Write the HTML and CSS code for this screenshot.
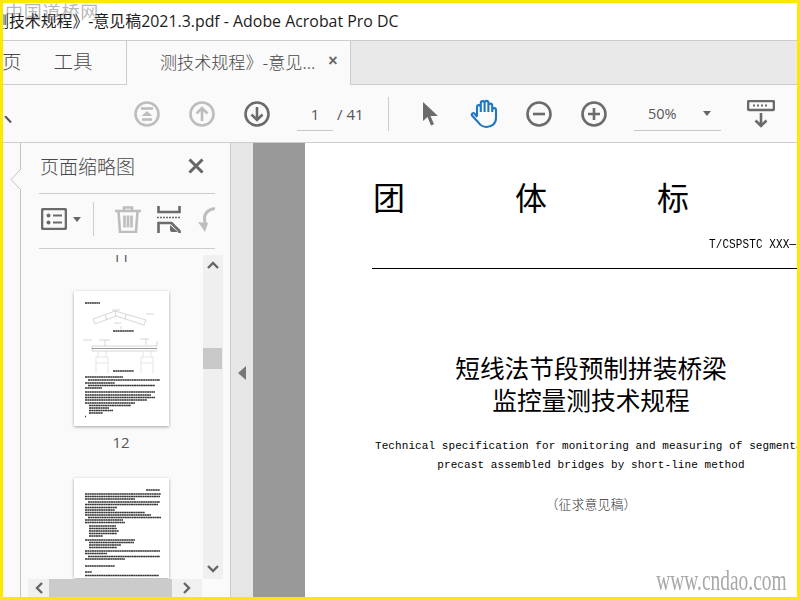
FILE: index.html
```html
<!DOCTYPE html>
<html lang="zh">
<head>
<meta charset="utf-8">
<title>Adobe Acrobat Pro DC</title>
<link rel="stylesheet" href="styles.css">
</head>
<body>
<div class="frame">
  <header class="titlebar"><span class="title">测技术规程》-意见稿2021.3.pdf - Adobe Acrobat Pro DC</span></header>

  <nav class="tabbar">
    <div class="navtabs"><span class="nav-home">页</span><span class="nav-tools">工具</span></div>
    <div class="doctab"><span class="doctab-name">测技术规程》-意见...</span><span class="doctab-close">×</span></div>
  </nav>

  <div class="toolbar">
    <svg class="tick" viewBox="0 0 8 8" width="8" height="8"><path d="M1 0 7 6.500" class="s-dark2"/></svg>
    <svg class="ic ic-first" viewBox="0 0 26 26" width="26" height="26"><circle cx="13" cy="13" r="11.500" class="s-off"/><path d="M7 7.500h12" class="s-off"/><path d="M13 10l-5.500 5h11z" class="f-off"/><path d="M8 18.500h10" class="s-off"/></svg>
    <svg class="ic ic-up" viewBox="0 0 26 26" width="26" height="26"><circle cx="13" cy="13" r="11.500" class="s-off"/><path d="M13 20V7M7.500 12.500 13 7l5.500 5.500" class="s-off"/></svg>
    <svg class="ic ic-down" viewBox="0 0 26 26" width="26" height="26"><circle cx="13" cy="13" r="11.500" class="s-on"/><path d="M13 6v13M7.500 13.500 13 19l5.500-5.500" class="s-on"/></svg>
    <div class="pagefield"><span class="pagenum">1</span></div>
    <span class="pagetotal">/ 41</span>
    <span class="tool-sep"></span>
    <svg class="ic ic-arrow" viewBox="0 0 18 26" width="18" height="26"><path d="M1 1v19l4.500-4 3.500 8.500 3-1.200-3.500-8.300H16z" class="f-on"/></svg>
    <svg class="ic ic-hand" viewBox="0 0 30 30" width="30" height="30"><path d="M8 17V8a1.900 1.900 0 0 1 3.800 0V13M11.800 13V4a1.900 1.900 0 0 1 3.800 0V13M15.600 13V3.800a1.900 1.900 0 0 1 3.800 0V13M19.400 13V6.500a1.900 1.900 0 0 1 3.800 0V13M23.200 13v-2a1.900 1.900 0 0 1 3.800 0V19c0 5.500-4 9-9.500 9-4 0-6.500-2-8.500-5l-6-6.500c-1-1.300 1-3 2.500-2L8 18" class="s-blue"/></svg>
    <svg class="ic ic-minus" viewBox="0 0 26 26" width="26" height="26"><circle cx="13" cy="13" r="11.500" class="s-on"/><path d="M7 13h12" class="s-on"/></svg>
    <svg class="ic ic-plus" viewBox="0 0 26 26" width="26" height="26"><circle cx="13" cy="13" r="11.500" class="s-on"/><path d="M7 13h12M13 7v12" class="s-on"/></svg>
    <div class="zoomfield"><span class="zoomval">50%</span><span class="caret caret-zoom"></span></div>
    <svg class="ic ic-read" viewBox="0 0 28 28" width="28" height="28"><rect x="1" y="1" width="26" height="9" rx="1.500" class="s-on"/><path d="M6 5.500h2M10 5.500h2M14 5.500h2M18 5.500h2" class="s-dots"/><path d="M14 13v13M8.500 20.500 14 26l5.500-5.500" class="s-on"/></svg>
  </div>

  <main class="workspace">
    <div class="rail"></div>
    <aside class="panel">
      <svg class="notch" viewBox="0 0 11 20" width="11" height="20"><path d="M11 0H10L1 9.500 10 19h1z" class="f-panel"/><path d="M10 0 1 9.500 10 19" class="s-notch"/></svg>
      <div class="panel-head"><span class="panel-title">页面缩略图</span>
        <svg class="panel-close" viewBox="0 0 16 16" width="16" height="16"><path d="M1.500 1.500l13 13M14.500 1.500l-13 13" class="s-close"/></svg>
      </div>
      <div class="panel-tools">
        <svg class="pt-list" viewBox="0 0 26 22" width="26" height="22"><rect x="1" y="1" width="24" height="20" rx="2" class="s-on"/><circle cx="7.500" cy="7.500" r="2" class="f-on"/><circle cx="7.500" cy="14.500" r="2" class="f-on"/><path d="M12 7.500h9M12 14.500h9" class="s-thin"/></svg>
        <span class="caret caret-list"></span>
        <span class="pt-sep"></span>
        <svg class="pt-trash" viewBox="0 0 26 28" width="26" height="28"><path d="M0 6h26M9 6V2.500h8V6M3.500 6l1.500 21h16l1.500-21M9.500 10.500v12M13 10.500v12M16.500 10.500v12" class="s-off"/></svg>
        <svg class="pt-extract" viewBox="0 0 24 27" width="24" height="27"><path d="M1.500 0v6h21V0" class="s-on"/><path d="M0 11.500h24" class="s-dash"/><path d="M1.500 27V17H14.500l8 8v2" class="s-on"/><path d="M13 19v5a2 2 0 0 0 2 2h6z" class="f-on"/></svg>
        <svg class="pt-rotate" viewBox="0 0 17 25" width="17" height="25"><path d="M17 1.500C10 2.500 6.500 6.500 6.500 12c0 2 .5 4 1.500 6" class="s-off-w"/><path d="M0 15l10 1-3 9z" class="f-off"/></svg>
      </div>
      <div class="thumb-area">
        <div class="thumb-view">
          <div class="thumb-label thumb-label-cut">11</div>
          <svg class="thumb" viewBox="0 0 95 135" width="95" height="135"><g class="t-blur">
            <path d="M11 12h15" class="t-text"/>
            <path d="M19 28 41 20 72 29M21 33 42 25 70 34M19 28l2 5M72 29l-2 5M31 24l2 5M41 20l1 5M52 23l-1 5M38 19h8M72 23h8M40 32h7M47 35v3" class="t-line"/>
            <path d="M39 40h21M39 80h21" class="t-text"/>
            <path d="M18 55h65M18 60h65M18 55v5M83 55v-5M25 49h11M66 48h9M9 49h9M31 49v6M72 48v6" class="t-line"/>
            <path d="M18 57.500h65" class="t-mid"/>
            <path d="M22 66v16M34 66v16M22 66h12M24 60v6M32 60v6M22 72h12M67 66v16M79 66v16M67 66h12M69 60v6M77 60v6M67 72h12" class="t-faint"/>
            <path d="M11 86h38M14 89h72M11 92h30M14 94.500h67M11 97h17M11 101h70M11 104h66M11 106.500h70M11 109h62M11 112h50M15 114.500h42M15 117h20M15 119.500h24M15 122h14" class="t-text"/>
            <path d="M11 125.500h1" class="t-text"/>
          </g></svg>
          <div class="thumb-label">12</div>
          <svg class="thumb thumb-next" viewBox="0 0 95 100" width="95" height="100"><g class="t-blur">
            <path d="M72 12h14M11 16h76M11 18.500h75M11 21h50M14 24h72M11 26.500h73M11 29.500h32M11 32h30M11 34.500h60M11 37h66M14 39.500h73M11 42h38M11 44.500h40M15 48h27M15 50.500h28M15 53h30M15 55.500h28M15 58h14M11 62h50M15 64.500h45M15 67h32M15 69.500h28M11 73h75M11 75.500h22M14 78.500h72M11 81h40M11 88h30M11 94h7M11 97.500h74" class="t-text"/>
          </g></svg>
        </div>
        <div class="vscroll">
          <button class="sb-btn sb-up"><svg viewBox="0 0 12 8" width="12" height="8"><path d="M1 7l5-5 5 5" class="s-sb"/></svg></button>
          <div class="vtrack"><div class="vthumb"></div></div>
          <button class="sb-btn sb-down"><svg viewBox="0 0 12 8" width="12" height="8"><path d="M1 1l5 5 5-5" class="s-sb"/></svg></button>
        </div>
      </div>
      <div class="hscroll">
        <button class="hs-btn hs-left"><svg viewBox="0 0 8 12" width="8" height="12"><path d="M7 1 2 6l5 5" class="s-sb"/></svg></button>
        <div class="hthumb"></div>
        <button class="hs-btn hs-right"><svg viewBox="0 0 8 12" width="8" height="12"><path d="M1 1l5 5-5 5" class="s-sb"/></svg></button>
        <div class="hcorner"></div>
      </div>
    </aside>
    <div class="handle"><span class="handle-arrow"></span></div>
    <div class="gutter"></div>
    <article class="page">
      <div class="doc-std"><span>团</span><span>体</span><span>标</span></div>
      <div class="doc-code">T/CSPSTC XXX—2021</div>
      <div class="doc-rule"></div>
      <h1 class="doc-title">短线法节段预制拼装桥梁<br>监控量测技术规程</h1>
      <p class="doc-en doc-en-1">Technical specification for monitoring and measuring of segmental</p>
      <p class="doc-en doc-en-2">precast assembled bridges by short-line method</p>
      <p class="doc-note">（征求意见稿）</p>
    </article>
  </main>

  <div class="wm wm-cn">中国道桥网</div>
  <div class="wm wm-url">www.cndao.com</div>
</div>
</body>
</html>
```
FILE: styles.css
```css
* { box-sizing: border-box; }
html, body { margin: 0; padding: 0; }
body { width: 800px; height: 600px; overflow: hidden; background: #fff; font-family: "Open Sans", "Noto Sans CJK SC", sans-serif; color: #4b4b4b; }
.frame { position: relative; width: 800px; height: 600px; border: solid #ffe800; border-width: 3px 3px 3px 3px; display: flex; flex-direction: column; overflow: hidden; background: #fff; }

.titlebar { height: 37px; flex: none; background: #fff; overflow: hidden; display: flex; align-items: center; padding-bottom: 3px; }
.title { margin-left: -10px; font-size: 15.900px; color: #1c1c1c; white-space: nowrap; font-family: "Open Sans", "Noto Sans CJK SC", sans-serif; }

.tabbar { height: 45px; flex: none; display: flex; background: #e9e9e9; border-top: 1px solid #cdcdcd; border-bottom: 1px solid #cdcdcd; }
.navtabs { width: 123px; background: #fafafa; font-size: 19.500px; color: #484848; display: flex; align-items: center; overflow: hidden; padding-bottom: 4px; font-family: "Noto Sans CJK SC", sans-serif; font-weight: 300; }
.nav-home { margin-left: -1px; }
.nav-tools { margin-left: 32px; }
.doctab { width: 225px; background: #fafafa; margin-bottom: -1px; border-left: 1px solid #cdcdcd; border-right: 1px solid #cdcdcd; display: flex; align-items: center; padding-bottom: 4px; }
.doctab-name { margin-left: 33px; font-size: 17.100px; color: #484848; white-space: nowrap; font-family: "Noto Sans CJK SC", sans-serif; font-weight: 300; }
.doctab-close { margin-left: 13px; font-size: 16px; font-weight: 700; color: #666; font-family: "Liberation Sans", sans-serif; }

.toolbar { height: 58px; flex: none; background: #fafafa; border-bottom: 1px solid #cdcdcd; display: flex; align-items: center; position: relative; }
.tick { margin: 13px 0 0 1px; flex: none; }
.ic { flex: none; display: block; }
.ic-first { margin-left: 122px; }
.ic-up { margin-left: 29px; }
.ic-down { margin-left: 29px; }
.pagefield { width: 36px; height: 34px; margin: 1px 0 0 27px; border-bottom: 1px solid #c8c8c8; display: flex; align-items: center; justify-content: center; }
.pagenum { font-size: 15px; color: #555; }
.pagetotal { margin-left: 4px; width: 27px; font-size: 15px; color: #555; white-space: nowrap; }
.tool-sep { width: 1px; height: 34px; background: #cdcdcd; margin-left: 24px; }
.ic-arrow { margin-left: 33px; }
.ic-hand { margin-left: 29px; }
.ic-minus { margin-left: 27px; }
.ic-plus { margin-left: 29px; }
.zoomfield { width: 87px; height: 34px; margin: 1px 0 0 27px; border-bottom: 1px solid #c8c8c8; display: flex; align-items: center; }
.zoomval { margin-left: 14px; font-size: 14.500px; color: #555; }
.caret { display: block; width: 0; height: 0; border-style: solid; border-color: #666 transparent transparent; }
.caret-zoom { border-width: 5px 4px 0; margin-left: 26px; }
.ic-read { margin-left: 26px; }

.s-on, .s-off, .s-blue, .s-close, .s-thin, .s-off-w, .s-sb, .s-notch, .s-dark2, .s-dots, .s-dash { fill: none; }
.s-on { stroke: #6b6b6b; stroke-width: 2.600; }
.s-off { stroke: #bdbdbd; stroke-width: 2.600; }
.s-off-w { stroke: #bdbdbd; stroke-width: 3; }
.f-on { fill: #6b6b6b; }
.f-off { fill: #bdbdbd; }
.f-panel { fill: #fafafa; }
.s-blue { stroke: #1f77c4; stroke-width: 2.100; stroke-linejoin: round; }
.s-close { stroke: #666; stroke-width: 3; }
.s-thin { stroke: #6b6b6b; stroke-width: 2; }
.s-dots { stroke: #6b6b6b; stroke-width: 2; }
.s-dash { stroke: #6b6b6b; stroke-width: 1.500; stroke-dasharray: 2 1; }
.s-sb { stroke: #666; stroke-width: 2.400; }
.s-notch { stroke: #c4c4c4; stroke-width: 1; }
.s-dark2 { stroke: #555; stroke-width: 2; }

.workspace { flex: 1; min-height: 0; display: flex; }
.rail { width: 18px; flex: none; background: #fafafa; border-right: 1px solid #c4c4c4; }
.panel { position: relative; width: 210px; flex: none; background: #fafafa; border-right: 1px solid #cdcdcd; display: flex; flex-direction: column; }
.notch { position: absolute; left: -11px; top: 27px; }
.panel-head { height: 51px; margin: 0 15px 0 18px; flex: none; border-bottom: 1px solid #cdcdcd; display: flex; align-items: center; justify-content: space-between; padding: 0 11px 6px 1px; }
.panel-title { font-size: 19px; color: #484848; font-family: "Noto Sans CJK SC", sans-serif; font-weight: 300; }
.panel-close { margin-top: 1px; }
.panel-tools { height: 55px; margin: 0 15px 0 18px; flex: none; border-bottom: 1px solid #cdcdcd; display: flex; align-items: center; overflow: hidden; padding-bottom: 4px; }
.panel-tools svg { flex: none; }
.pt-list { margin-left: 2px; }
.caret-list { border-width: 5px 4px 0; margin-left: 6px; }
.pt-sep { width: 1px; height: 34px; background: #cdcdcd; margin-left: 12px; }
.pt-trash { margin-left: 21px; }
.pt-extract { margin-left: 16px; }
.pt-rotate { margin-left: 17px; }

.thumb-area { flex: 1; min-height: 0; display: flex; padding-top: 6px; }
.thumb-view { width: 182px; flex: none; overflow: hidden; padding-left: 18px; display: flex; flex-direction: column; align-items: center; }
.thumb-label { font-size: 15px; line-height: 20px; color: #555; font-family: "Open Sans", sans-serif; flex: none; }
.thumb-label-cut { margin-top: -9px; }
.thumb { flex: none; display: block; background: #fff; box-shadow: 0 1px 3px rgba(0,0,0,.35); margin-top: 25px; }
.thumb + .thumb-label { margin-top: 6px; }
.thumb-next { margin-top: 26px; }
.t-blur { filter: blur(.3px); }
.t-text { fill: none; stroke: #111; stroke-width: 1.400; stroke-dasharray: 2 .3; opacity: .85; }
.t-line { fill: none; stroke: #bbb; stroke-width: .6; }
.t-mid { fill: none; stroke: #999; stroke-width: 1; }
.t-faint { fill: none; stroke: #d4d4d4; stroke-width: .6; }
.vscroll { width: 20px; flex: none; background: #efefef; display: flex; flex-direction: column; }
.sb-btn, .hs-btn { border: 0; padding: 0; margin: 0; background: #f0f0f0; display: flex; align-items: center; justify-content: center; flex: none; }
.sb-btn { height: 20px; }
.vtrack { flex: 1; padding-top: 73px; }
.vthumb { width: 19px; height: 21px; background: #c8c8c8; }
.hscroll { height: 18px; flex: none; margin-left: 7px; width: 195px; display: flex; }
.hs-btn { width: 21px; }
.hs-right { width: 30px; }
.hthumb { width: 123px; background: #cbcbcb; flex: none; }
.hcorner { flex: 1; background: #fafafa; }

.handle { width: 22px; flex: none; background: #e6e6e6; display: flex; align-items: center; justify-content: center; }
.handle-arrow { display: block; width: 0; height: 0; border-style: solid; border-width: 7px 8px 7px 0; border-color: transparent #777 transparent transparent; margin-top: 6px; }
.gutter { width: 52px; flex: none; background: #999; }

.page { flex: 1; min-width: 0; background: #fff; overflow: hidden; color: #000; padding-left: 67px; font-family: "Noto Sans CJK SC", sans-serif; }
.doc-std { height: 37px; margin: 33px 0 0 1px; overflow: hidden; width: 500px; display: flex; gap: 110px; font-size: 32px; line-height: 40px; }
.doc-code { margin: 24px 0 0 337px; width: 200px; height: 16px; font: 11px/16px "Liberation Mono", monospace; letter-spacing: .1px; white-space: nowrap; transform: scaleY(1.15); }
.doc-rule { width: 440px; height: 1px; background: #000; margin-top: 15px; }
.doc-title { width: 438px; margin: 82px 0 0; font-size: 24.700px; line-height: 32px; font-weight: 400; text-align: center; }
.doc-en { margin: 0; font: 11px/19px "Liberation Mono", monospace; letter-spacing: .08px; white-space: nowrap; }
.doc-en-1 { margin: 22px 0 0 3px; }
.doc-en-2 { width: 438px; text-align: center; }
.doc-note { margin: 20px 0 0; width: 438px; text-align: center; font-size: 13px; line-height: 18px; color: #333; font-weight: 300; }

.wm { position: absolute; white-space: nowrap; pointer-events: none; }
.wm-cn { left: 2px; top: -5px; font-family: "Noto Sans CJK SC", sans-serif; font-size: 18px; letter-spacing: .8px; color: rgba(110,110,110,.5); font-weight: 400; }
.wm-url { right: 10px; bottom: 0; font-family: "Liberation Serif", serif; font-size: 29px; color: #a8a8a8; transform: scaleX(.67); transform-origin: right center; }
```
